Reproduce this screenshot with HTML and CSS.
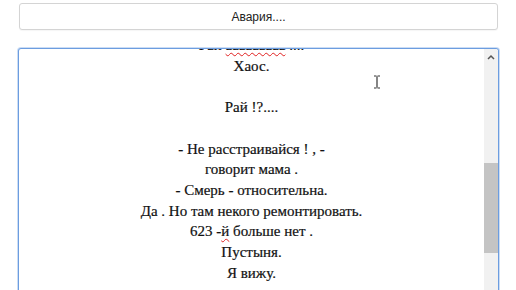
FILE: index.html
```html
<!DOCTYPE html>
<html lang="ru">
<head>
  <meta charset="UTF-8">
  <title>Авария</title>
  <link rel="stylesheet" href="styles.css">
</head>
<body>
  <div class="page">
    <button class="btn-title">Авария....</button>

    <div class="editor">
      <div class="editor-body">
        <div class="editor-text">
          <p>Рай <span class="typo">ааааааааа</span> ....</p>
          <p>Хаос.</p>
          <p>&nbsp;</p>
          <p>Рай !?....</p>
          <p>&nbsp;</p>
          <p>- Не расстраивайся ! , -</p>
          <p>говорит мама .</p>
          <p>- Смерь - относительна.</p>
          <p>Да . Но там некого ремонтировать.</p>
          <p>623 -<span class="typo">й</span> больше нет .</p>
          <p>Пустыня.</p>
          <p>Я вижу.</p>
        </div>
        <svg class="ibeam" width="8" height="14" viewBox="0 0 8 14">
          <path d="M1 1h2.5M4.5 1H7M4 1.5v11M1 13h2.5M4.5 13H7" stroke="#333" stroke-width="1.2" fill="none"/>
        </svg>
      </div>
      <div class="scrollbar">
        <svg class="arrow" width="8" height="6" viewBox="0 0 8 6">
          <path d="M1 5l3-3 3 3" stroke="#555" stroke-width="1.5" fill="none"/>
        </svg>
        <div class="track">
          <div class="thumb"></div>
        </div>
      </div>
    </div>
  </div>
</body>
</html>
```

FILE: styles.css
```css
* { margin: 0; padding: 0; box-sizing: border-box; }
html, body { height: 100%; overflow: hidden; background: #fff; }
body { font-family: "Liberation Serif", serif; color: #222; }

.page { height: 100%; padding: 3px 17px 0 18px; display: flex; flex-direction: column; gap: 18px; }

.btn-title {
  height: 27px; margin: 0 1px; background: #fff; border: 1px solid #d4d4d4; border-radius: 3px;
  font-family: "Liberation Sans", Arial, sans-serif; font-size: 12px; color: #222;
  box-shadow: 0 1px 1px rgba(0, 0, 0, 0.04);
}

.editor {
  display: flex; flex: 1; min-height: 0; border: 1px solid #6c9de0; border-bottom: none;
  border-radius: 3px 3px 0 0; box-shadow: 0 0 0 1px rgba(108, 157, 224, 0.35);
  overflow: hidden;
}
.editor-body { position: relative; flex: 1; overflow: hidden; }
.editor-text {
  margin-top: -14px; text-align: center; font-family: "Liberation Serif", serif;
  font-size: 15px; line-height: 20.7px; color: #111; -webkit-text-stroke: 0.2px #111;
}
.typo { text-decoration: underline wavy #e02020; text-decoration-thickness: 1px; text-underline-offset: 2px; }
.ibeam { position: absolute; left: 354px; top: 26px; }

.scrollbar { width: 14px; display: flex; flex-direction: column; background: #f1f1f1; }
.arrow { margin: 5px auto 3px; display: block; }
.track { flex: 1; padding-top: 100px; }
.thumb { height: 90px; background: #c4c4c4; }
```
